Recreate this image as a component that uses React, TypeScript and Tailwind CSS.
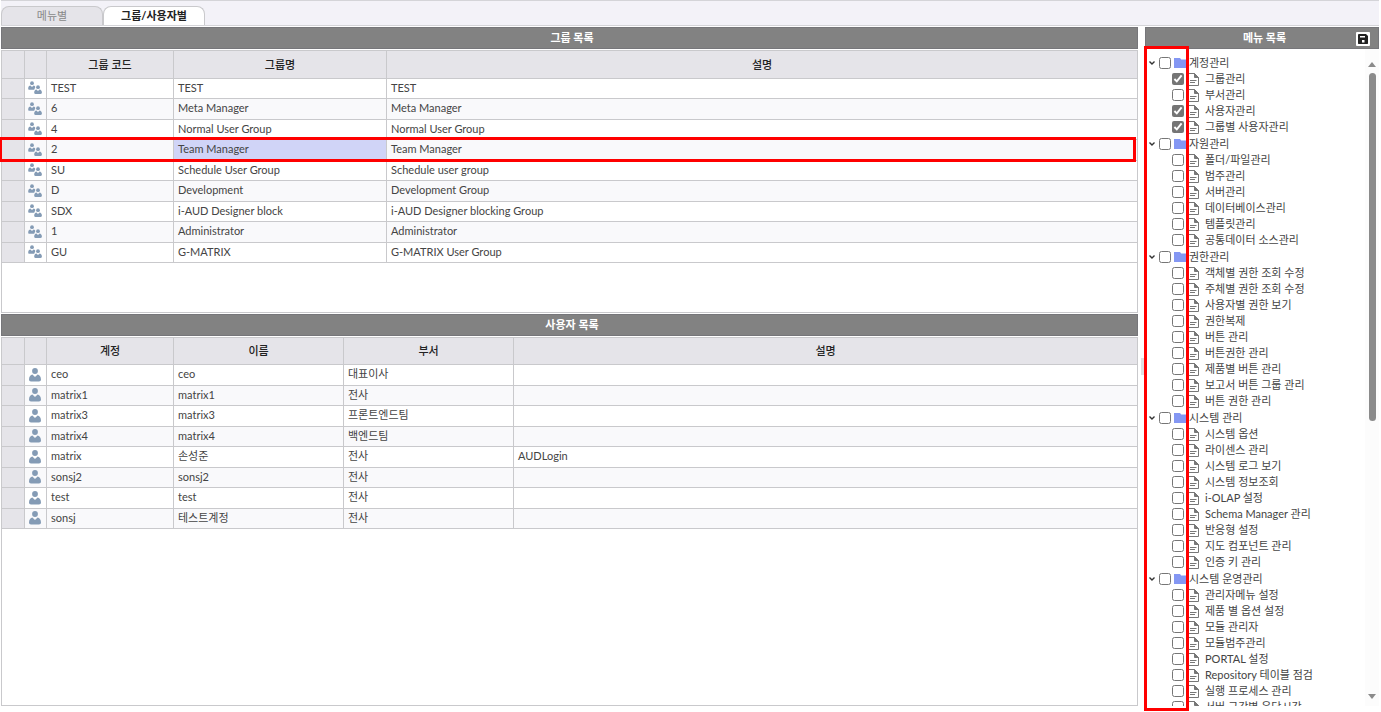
import clsx from "clsx";

type Column = { label: string; width?: string };

type MenuGroup = { name: string; items: string[] };

const groupColumns: Column[] = [
  { label: "그룹 코드", width: "w-[127px]" },
  { label: "그룹명", width: "w-[213px]" },
  { label: "설명" },
];

const groups = [
  ["TEST", "TEST", "TEST"],
  ["6", "Meta Manager", "Meta Manager"],
  ["4", "Normal User Group", "Normal User Group"],
  ["2", "Team Manager", "Team Manager"],
  ["SU", "Schedule User Group", "Schedule user group"],
  ["D", "Development", "Development Group"],
  ["SDX", "i-AUD Designer block", "i-AUD Designer blocking Group"],
  ["1", "Administrator", "Administrator"],
  ["GU", "G-MATRIX", "G-MATRIX User Group"],
];

const userColumns: Column[] = [
  { label: "계정", width: "w-[127px]" },
  { label: "이름", width: "w-[170px]" },
  { label: "부서", width: "w-[170px]" },
  { label: "설명" },
];

const users = [
  ["ceo", "ceo", "대표이사", ""],
  ["matrix1", "matrix1", "전사", ""],
  ["matrix3", "matrix3", "프론트엔드팀", ""],
  ["matrix4", "matrix4", "백엔드팀", ""],
  ["matrix", "손성준", "전사", "AUDLogin"],
  ["sonsj2", "sonsj2", "전사", ""],
  ["test", "test", "전사", ""],
  ["sonsj", "테스트계정", "전사", ""],
];

const checkedMenus = ["그룹관리", "사용자관리", "그룹별 사용자관리"];

const menus: MenuGroup[] = [
  {
    name: "계정관리",
    items: ["그룹관리", "부서관리", "사용자관리", "그룹별 사용자관리"],
  },
  {
    name: "자원관리",
    items: [
      "폴더/파일관리",
      "범주관리",
      "서버관리",
      "데이터베이스관리",
      "템플릿관리",
      "공통데이터 소스관리",
    ],
  },
  {
    name: "권한관리",
    items: [
      "객체별 권한 조회 수정",
      "주체별 권한 조회 수정",
      "사용자별 권한 보기",
      "권한복제",
      "버튼 관리",
      "버튼권한 관리",
      "제품별 버튼 관리",
      "보고서 버튼 그룹 관리",
      "버튼 권한 관리",
    ],
  },
  {
    name: "시스템 관리",
    items: [
      "시스템 옵션",
      "라이센스 관리",
      "시스템 로그 보기",
      "시스템 정보조회",
      "i-OLAP 설정",
      "Schema Manager 관리",
      "반응형 설정",
      "지도 컴포넌트 관리",
      "인증 키 관리",
    ],
  },
  {
    name: "시스템 운영관리",
    items: [
      "관리자메뉴 설정",
      "제품 별 옵션 설정",
      "모듈 관리자",
      "모듈범주관리",
      "PORTAL 설정",
      "Repository 테이블 점검",
      "실행 프로세스 관리",
      "서버 구간별 응답시간",
    ],
  },
];

function UserIcon() {
  return (
    <svg viewBox="0 0 14 14" className="mx-auto block size-[14px] fill-[#849bb5]">
      <circle cx="7" cy="3" r="2.9" />
      <path d="M1 11.6C1 8.4 2.6 6.6 4.4 6.4L7 9L9.6 6.4C11.4 6.6 13 8.4 13 11.6C13 13 12.2 13.4 11 13.4H3C1.8 13.4 1 13 1 11.6Z" />
    </svg>
  );
}

function UsersIcon() {
  return (
    <svg viewBox="0 0 14 14" className="mx-auto block size-[14px] fill-[#849bb5]">
      <circle cx="4" cy="2.2" r="1.9" />
      <path d="M0.2 7.4C0.2 5.6 1.2 4.6 2.4 4.5L4 6L5.6 4.5C6.6 4.6 7.2 5.2 7.3 6.2L6.2 8.8H1.4C0.6 8.8 0.2 8.4 0.2 7.4Z" />
      <circle cx="10" cy="6.2" r="1.9" />
      <path d="M6.2 11.6C6.2 9.8 7.2 8.6 8.4 8.5L10 10L11.6 8.5C12.8 8.6 13.9 9.8 13.9 11.6C13.9 12.6 13.4 13 12.6 13H7.4C6.6 13 6.2 12.6 6.2 11.6Z" />
    </svg>
  );
}

function FolderIcon() {
  return (
    <svg viewBox="0 0 13 10" className="h-[10px] w-[13px] shrink-0 fill-[#8497f3]">
      <path d="M0 0H6L7.2 1.5H13V10H0Z" />
    </svg>
  );
}

function DocIcon() {
  return (
    <svg
      viewBox="0 0 11 13"
      className="h-[13px] w-[11px] shrink-0 fill-none stroke-[#777777]"
    >
      <path d="M0.5 0.5H6.5L10.5 4.5V12.5H0.5Z" />
      <path d="M6.5 0.5V4.5H10.5Z" className="fill-[#777777]" />
      <path d="M2 7.5H8.5M2 9.5H7" />
    </svg>
  );
}

function SaveIcon() {
  return (
    <svg viewBox="0 0 14 14" className="block size-[14px]">
      <rect width="14" height="14" rx="1" fill="#fff" />
      <path d="M2.5 2H10L12 4V11.5L11.5 12H2.5L2 11.5V2.5Z" fill="#222" />
      <path d="M4 4H9V5.5H4Z" fill="#fff" />
      <rect x="6" y="8" width="2.5" height="2.5" fill="#fff" />
    </svg>
  );
}

function PanelTitle({ children }: { children: string }) {
  return (
    <h2 className="flex h-[22px] shrink-0 items-center justify-center border border-[#76767a] bg-[#828282] pl-[5px] text-[11px] font-bold text-white">
      {children}
    </h2>
  );
}

function Grid({
  columns,
  rows,
  icon,
  rowClass,
  headClass,
  selected,
}: {
  columns: Column[];
  rows: string[][];
  icon: React.ReactNode;
  rowClass: string;
  headClass: string;
  selected?: number;
}) {
  return (
    <table className="w-full table-fixed border-separate border-spacing-0">
      <thead>
        <tr className={clsx("bg-[#e5e4e9]", headClass)}>
          <th className="w-[23px] border-r border-b border-[#c9c9cc]"></th>
          <th className="w-[22px] border-r border-b border-[#c9c9cc]"></th>
          {columns.map((column) => (
            <th
              key={column.label}
              className={clsx(
                "border-r border-b border-[#c9c9cc] p-0 text-center font-medium text-[#222222] last:border-r-0",
                column.width
              )}
            >
              {column.label}
            </th>
          ))}
        </tr>
      </thead>
      <tbody>
        {rows.map((row, index) => (
          <tr
            key={row[0]}
            className={clsx("relative bg-white even:bg-[#f9f9fb]", rowClass)}
          >
            <td className="border-r border-b border-[#c9c9cc] bg-[#e5e4e9] p-0">
              {index === selected && (
                <span className="pointer-events-none absolute -top-[3px] right-[1px] -bottom-px -left-[3px] z-10 border-3 border-[#ff0000]"></span>
              )}
            </td>
            <td className="border-r border-b border-[#c9c9cc] pt-0 pr-[2px] pb-px pl-0">
              {icon}
            </td>
            {row.map((cell, i) => (
              <td
                key={i}
                className={clsx(
                  "truncate border-r border-b border-[#c9c9cc] px-1 pt-0 pb-[2px] last:border-r-0",
                  index === selected && i === 1 && "bg-[#d0d4f7]"
                )}
              >
                {cell}
              </td>
            ))}
          </tr>
        ))}
      </tbody>
    </table>
  );
}

function MenuTree() {
  return (
    <ul className="min-w-0 flex-1 overflow-hidden pt-[5px] pl-[3px]">
      {menus.map((menu) => (
        <li key={menu.name}>
          <label className="flex h-[17px] items-center whitespace-nowrap">
            <svg
              viewBox="0 0 8 8"
              className="mr-[3px] size-[8px] shrink-0 fill-none stroke-[#333333] stroke-[1.4]"
            >
              <path d="M1.5 2.5L4 5L6.5 2.5" />
            </svg>
            <input type="checkbox" className="mr-[3px] size-[12px] shrink-0 accent-[#757575]" />
            <FolderIcon />
            <span className="ml-[2px]">{menu.name}</span>
          </label>
          <ul className="pl-[24px]">
            {menu.items.map((item) => (
              <li key={item}>
                <label className="flex h-[16px] items-center whitespace-nowrap">
                  <input
                    type="checkbox"
                    defaultChecked={checkedMenus.includes(item)}
                    className="mr-[4px] size-[12px] shrink-0 accent-[#757575]"
                  />
                  <DocIcon />
                  <span className="ml-[6px]">{item}</span>
                </label>
              </li>
            ))}
          </ul>
        </li>
      ))}
    </ul>
  );
}

export default function App() {
  return (
    <div className="flex h-screen flex-col bg-white pr-[2px] pb-[6px] pl-px font-['Lato','Noto_Sans_CJK_KR',sans-serif] text-[11px] leading-[14px] text-[#444444]">
      <nav className="flex h-[26px] shrink-0 items-end border-y border-[#d4d4d8] bg-[#f3f2f8]">
        <button className="h-[19px] w-[102px] rounded-t-lg border border-b-0 border-[#c9c9cc] bg-[#e5e4e9] text-[#888888]">
          메뉴별
        </button>
        <button className="h-[19px] w-[102px] rounded-t-lg border border-b-0 border-[#c9c9cc] bg-white font-bold text-[#222222]">
          그룹/사용자별
        </button>
      </nav>

      <main className="flex min-h-0 flex-1 pt-px">
        <div className="flex min-w-0 flex-1 flex-col">
          <section className="flex h-[286px] shrink-0 flex-col">
            <PanelTitle>그룹 목록</PanelTitle>
            <div className="mt-px flex-1 border border-[#c9c9cc]">
              <Grid
                columns={groupColumns}
                rows={groups}
                icon={<UsersIcon />}
                headClass="h-[28px]"
                rowClass="h-[20px] even:h-[21px]"
                selected={3}
              />
            </div>
          </section>
          <section className="mt-px flex min-h-0 flex-1 flex-col">
            <PanelTitle>사용자 목록</PanelTitle>
            <div className="mt-px flex-1 border border-[#c9c9cc]">
              <Grid
                columns={userColumns}
                rows={users}
                icon={<UserIcon />}
                headClass="h-[27px]"
                rowClass="h-[21px] even:h-[20px]"
              />
            </div>
          </section>
        </div>

        <div className="flex w-[7px] shrink-0 items-center justify-end">
          <div className="h-[17px] w-[4px] bg-[#e0e0e2]"></div>
        </div>

        <aside className="relative flex w-[234px] shrink-0 flex-col">
          <div className="relative">
            <PanelTitle>메뉴 목록</PanelTitle>
            <button aria-label="저장" className="absolute top-[5px] right-[9px]">
              <SaveIcon />
            </button>
          </div>
          <div className="flex min-h-0 flex-1">
            <MenuTree />
            <div className="flex w-[14px] shrink-0 flex-col items-center justify-between bg-[#fcfcfc] pt-[13px] pb-[7px]">
              <svg viewBox="0 0 8 5" className="h-[5px] w-[8px] shrink-0 fill-[#8b8b8b]">
                <path d="M4 0L8 5H0Z" />
              </svg>
              <div className="flex w-full flex-1 flex-col items-center pt-[6px]">
                <div className="h-[56%] w-[7px] rounded-full bg-[#8b8b8b]"></div>
              </div>
              <svg viewBox="0 0 8 5" className="h-[5px] w-[8px] shrink-0 fill-[#8b8b8b]">
                <path d="M0 0H8L4 5Z" />
              </svg>
            </div>
          </div>
          <div className="pointer-events-none absolute top-[19px] -bottom-[5px] -left-px w-[45px] border-3 border-[#ff0000]"></div>
        </aside>
      </main>
    </div>
  );
}
